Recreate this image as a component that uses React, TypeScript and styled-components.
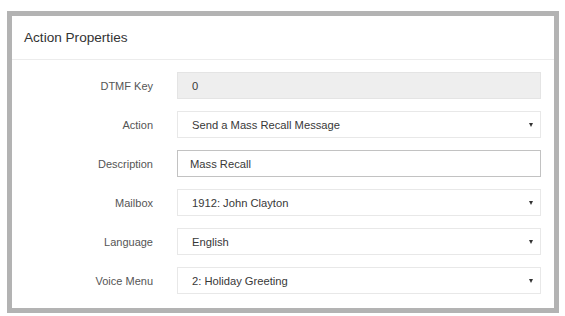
import { FC } from 'react';
import styled, { createGlobalStyle } from 'styled-components';

const GlobalStyle = createGlobalStyle`
  html, body {
    margin: 0;
    padding: 0;
    background: #ffffff;
  }
  body {
    font-family: 'Liberation Sans', Arial, sans-serif;
  }
`;

const Frame = styled.div`
  box-sizing: border-box;
  width: 552px;
  height: 302px;
  margin: 11px 0 0 7px;
  border: 5px solid #b3b3b3;
  background: #ffffff;
  display: flex;
  flex-direction: column;
`;

const PanelHeader = styled.div`
  height: 43px;
  padding: 0 12px;
  display: flex;
  align-items: center;
  border-bottom: 1px solid #ececec;
  font-size: 13.6px;
  color: #333333;
`;

const PanelBody = styled.div`
  padding: 12px 13px 0 0;
  display: flex;
  flex-direction: column;
  gap: 12px;
`;

const Row = styled.div`
  display: grid;
  grid-template-columns: 141px 1fr;
  column-gap: 24px;
  align-items: center;
`;

const Label = styled.div`
  text-align: right;
  font-size: 11px;
  color: #555555;
`;

const Field = styled.div<{ $readOnly?: boolean; $focused?: boolean }>`
  box-sizing: border-box;
  height: 27px;
  padding: 0 7px 0 ${props => (props.$focused ? '12px' : '14px')};
  display: flex;
  align-items: center;
  justify-content: space-between;
  font-size: 11.2px;
  color: #383838;
  background: ${props => (props.$readOnly ? '#eeeeee' : '#ffffff')};
  border: 1px solid ${props => (props.$focused ? '#c2c2c2' : props.$readOnly ? '#e4e4e4' : '#e8e8e8')};
`;

const Caret = styled.span`
  width: 0;
  height: 0;
  border-left: 2.5px solid transparent;
  border-right: 2.5px solid transparent;
  border-top: 4px solid #333333;
`;

interface FieldRow {
  label: string;
  value: string;
  kind: 'readonly' | 'select' | 'text';
}

const rows: FieldRow[] = [
  { label: 'DTMF Key', value: '0', kind: 'readonly' },
  { label: 'Action', value: 'Send a Mass Recall Message', kind: 'select' },
  { label: 'Description', value: 'Mass Recall', kind: 'text' },
  { label: 'Mailbox', value: '1912: John Clayton', kind: 'select' },
  { label: 'Language', value: 'English', kind: 'select' },
  { label: 'Voice Menu', value: '2: Holiday Greeting', kind: 'select' },
];

const App: FC = () => (
  <>
    <GlobalStyle />
    <Frame>
      <PanelHeader>Action Properties</PanelHeader>
      <PanelBody>
        {rows.map(row => (
          <Row key={row.label}>
            <Label>{row.label}</Label>
            <Field $readOnly={row.kind === 'readonly'} $focused={row.kind === 'text'}>
              <span>{row.value}</span>
              {row.kind === 'select' && <Caret />}
            </Field>
          </Row>
        ))}
      </PanelBody>
    </Frame>
  </>
);

export default App;
